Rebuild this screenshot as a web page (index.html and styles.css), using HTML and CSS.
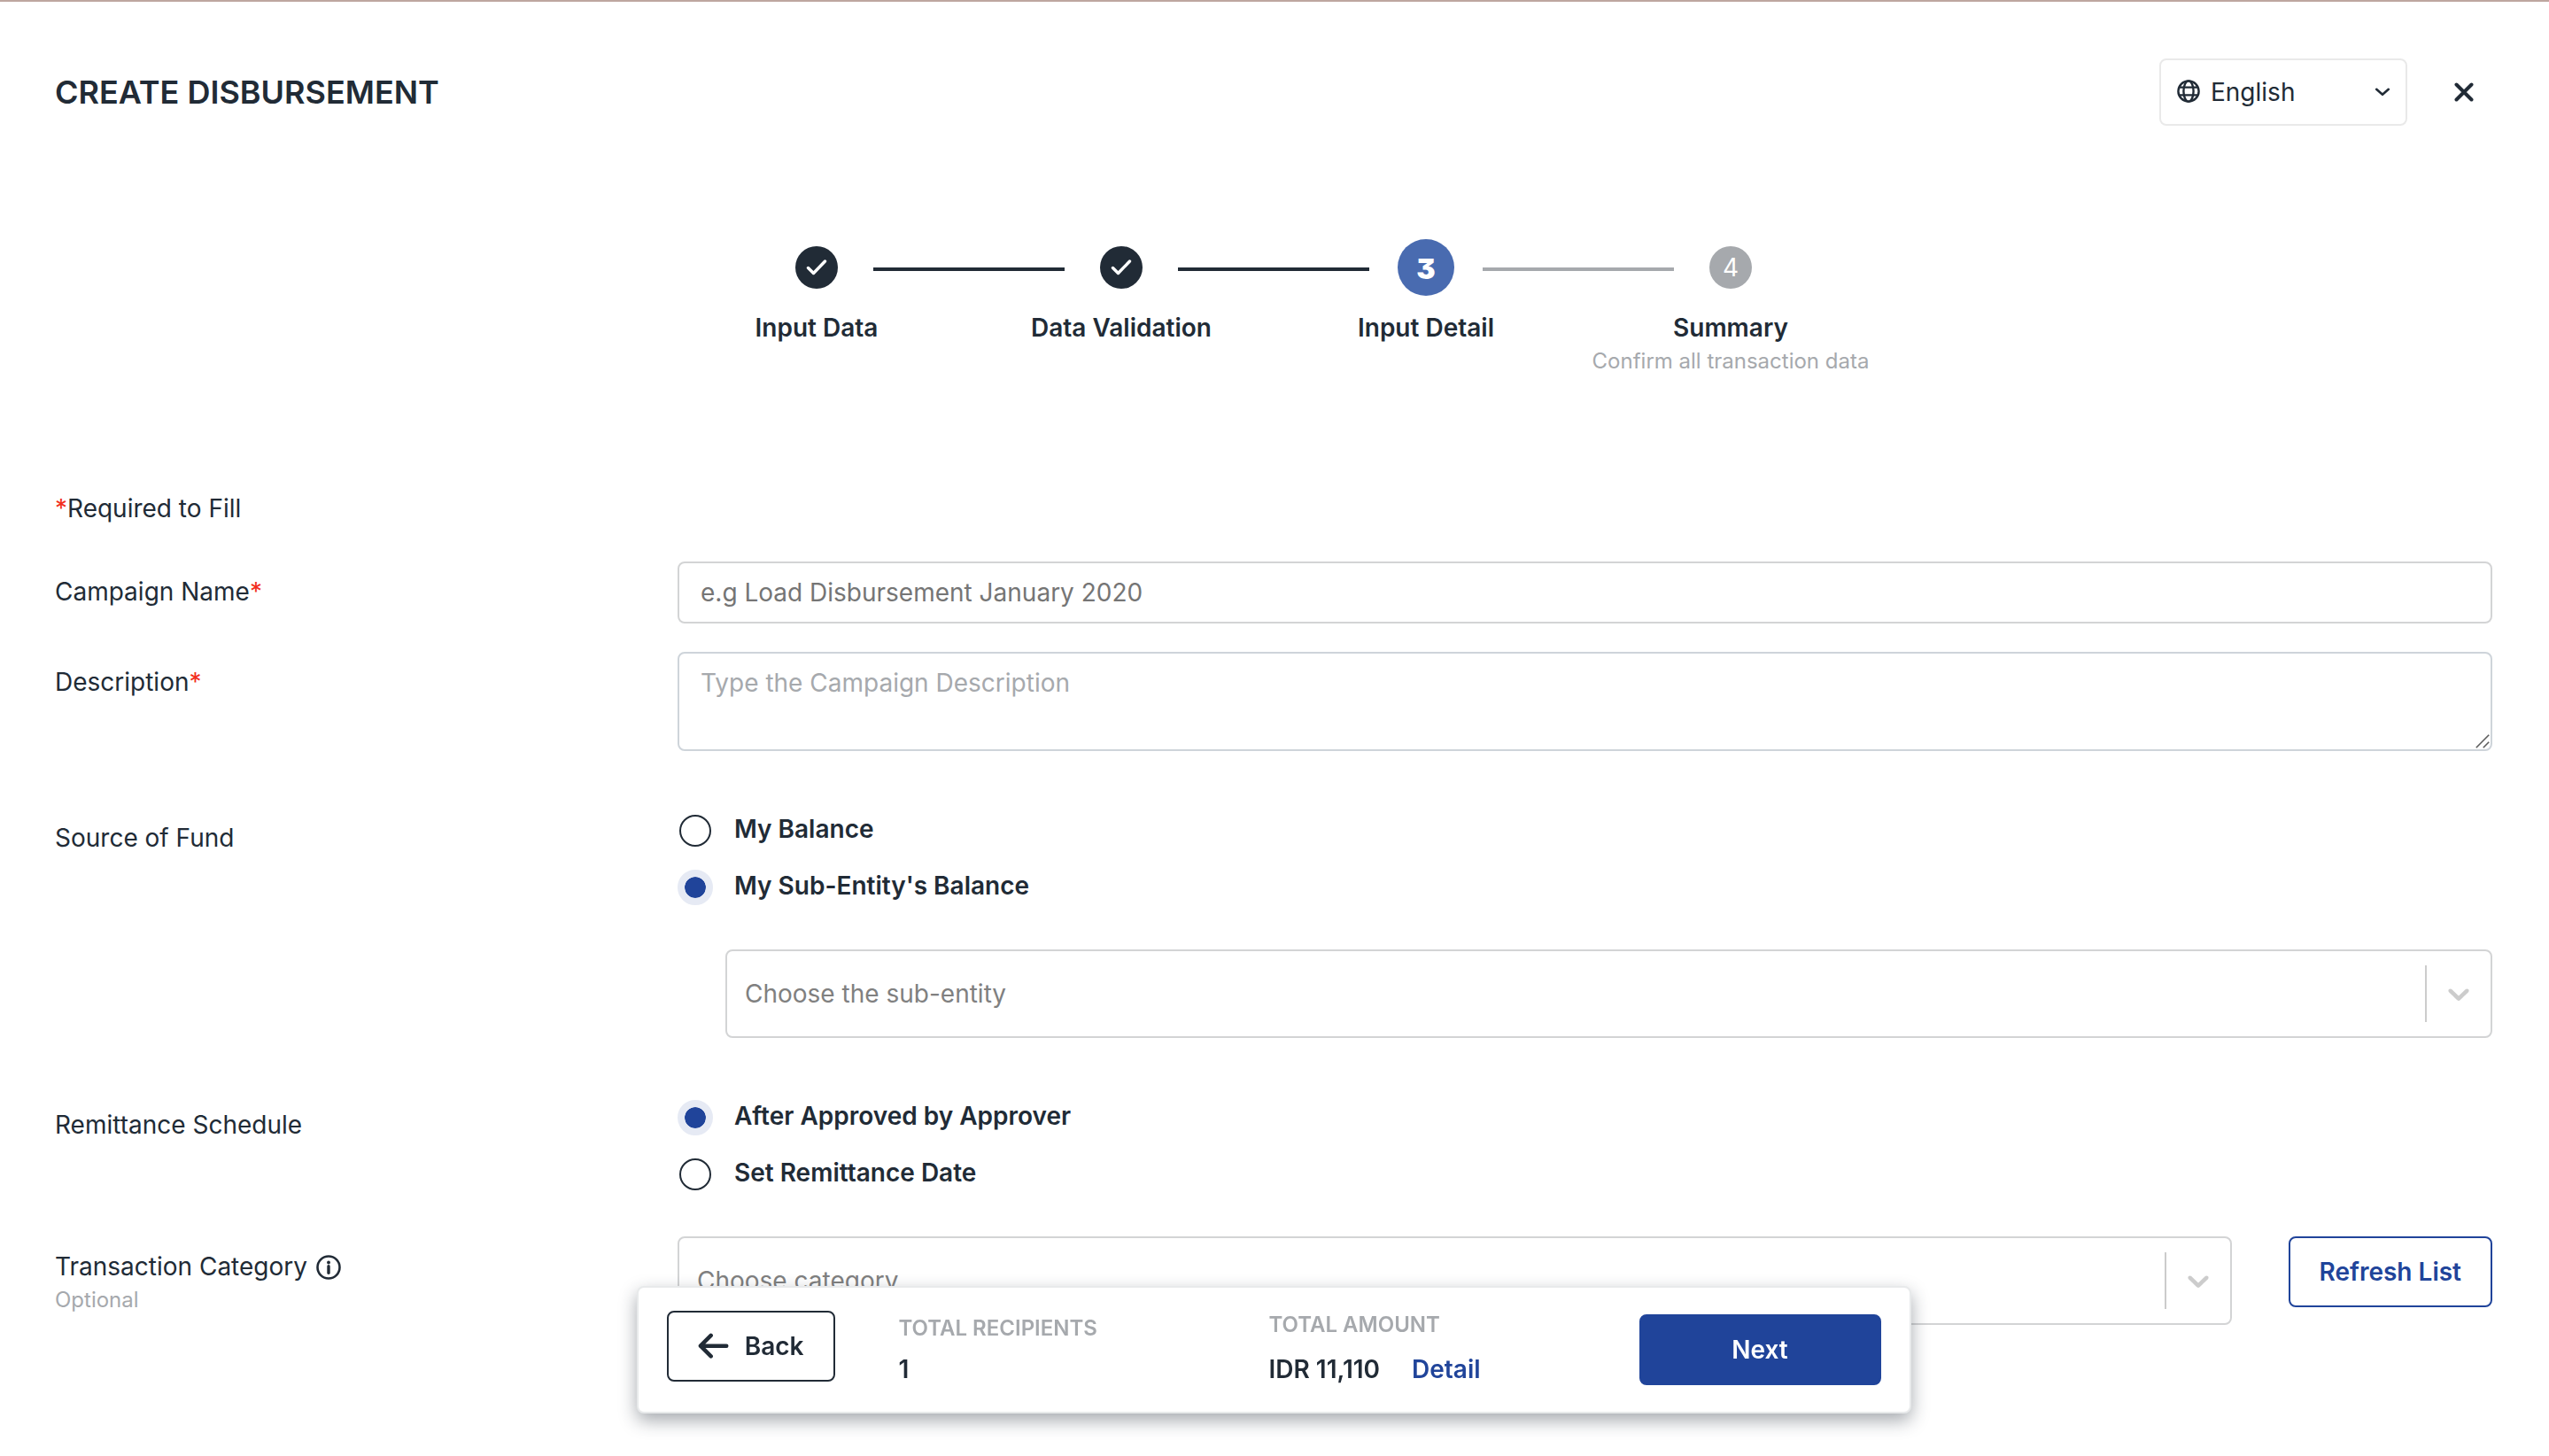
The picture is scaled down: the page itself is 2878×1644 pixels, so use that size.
FILE: index.html
```html
<!DOCTYPE html>
<html lang="en">
<head>
<meta charset="utf-8">
<meta name="viewport" content="width=device-width, initial-scale=1">
<title>Create Disbursement</title>
<link rel="stylesheet" href="styles.css">
</head>
<body>
<div class="page">
  <header class="header">
    <h1 class="title">CREATE DISBURSEMENT</h1>
    <div class="header-actions">
      <div class="select language">
        <svg class="globe" viewBox="0 0 26 26" fill="none" stroke="currentColor" stroke-width="2.400" aria-hidden="true"><circle cx="13" cy="13" r="11.600"/><ellipse cx="13" cy="13" rx="5.600" ry="11.600"/><path d="M2 8.600h22M2 17.400h22"/></svg>
        <select class="select-field language-field" aria-label="Language"><option>English</option></select>
        <svg class="language-arrow" viewBox="0 0 18 10" fill="none" stroke="currentColor" stroke-width="2.600" stroke-linecap="round" stroke-linejoin="round" aria-hidden="true"><path d="M2.200 1.800 9 7.800l6.800-6"/></svg>
      </div>
      <button class="close" type="button" aria-label="Close"><svg class="close-icon" viewBox="0 0 22 22" fill="none" stroke="currentColor" stroke-width="4" stroke-linecap="round" aria-hidden="true"><path d="M2.500 2.500l17 17M19.500 2.500l-17 17"/></svg></button>
    </div>
  </header>

  <ol class="stepper">
    <li class="step done">
      <div class="marker"><span class="dot"><svg class="check" viewBox="0 0 24 18" fill="none" stroke="currentColor" stroke-width="3.400" stroke-linecap="round" stroke-linejoin="round" aria-hidden="true"><path d="M2.500 9.500l6 6L21.500 2"/></svg></span></div>
      <span class="step-label">Input Data</span>
    </li>
    <li class="step done">
      <div class="marker"><span class="dot"><svg class="check" viewBox="0 0 24 18" fill="none" stroke="currentColor" stroke-width="3.400" stroke-linecap="round" stroke-linejoin="round" aria-hidden="true"><path d="M2.500 9.500l6 6L21.500 2"/></svg></span></div>
      <span class="step-label">Data Validation</span>
    </li>
    <li class="step active" aria-current="step">
      <div class="marker"><span class="dot">3</span></div>
      <span class="step-label">Input Detail</span>
    </li>
    <li class="step">
      <div class="marker"><span class="dot">4</span></div>
      <span class="step-label">Summary</span>
      <span class="hint">Confirm all transaction data</span>
    </li>
  </ol>

  <form class="form">
    <p class="required-note"><span class="star">*</span>Required to Fill</p>

    <div class="row">
      <label class="label" for="campaign">Campaign Name<span class="star">*</span></label>
      <input class="text-field" id="campaign" type="text" placeholder="e.g Load Disbursement January 2020">
    </div>

    <div class="row">
      <label class="label" for="description">Description<span class="star">*</span></label>
      <div class="area">
        <textarea class="text-field area-field" id="description" placeholder="Type the Campaign Description"></textarea>
        <svg class="grip" viewBox="0 0 16 16" fill="none" stroke="#5c5c5c" stroke-width="1.600" aria-hidden="true"><path d="M.8 15.200 15.200.8M8.800 15.200l6.400-6.400"/></svg>
      </div>
    </div>

    <div class="row choice-row" role="radiogroup" aria-labelledby="fund-label">
      <span class="label" id="fund-label">Source of Fund</span>
      <div class="choices">
        <label class="choice"><input class="radio" type="radio" name="fund"><span class="choice-text">My Balance</span></label>
        <label class="choice"><input class="radio" type="radio" name="fund" checked><span class="choice-text">My Sub-Entity's Balance</span></label>
        <div class="select nested">
          <select class="select-field" aria-label="Sub-entity"><option>Choose the sub-entity</option></select>
          <span class="indicator"><svg class="arrow" viewBox="0 0 20 20" fill="currentColor" aria-hidden="true"><path d="M4.516 7.548c0.436-0.446 1.043-0.481 1.576 0l3.908 3.747 3.908-3.747c0.533-0.481 1.141-0.446 1.574 0 0.436 0.445 0.408 1.197 0 1.615-0.406 0.418-4.695 4.502-4.695 4.502-0.217 0.223-0.502 0.335-0.787 0.335s-0.570-0.112-0.789-0.335c0 0-4.287-4.084-4.695-4.502s-0.436-1.170 0-1.615z"/></svg></span>
        </div>
      </div>
    </div>

    <div class="row choice-row" role="radiogroup" aria-labelledby="schedule-label">
      <span class="label" id="schedule-label">Remittance Schedule</span>
      <div class="choices">
        <label class="choice"><input class="radio" type="radio" name="schedule" checked><span class="choice-text">After Approved by Approver</span></label>
        <label class="choice"><input class="radio" type="radio" name="schedule"><span class="choice-text">Set Remittance Date</span></label>
      </div>
    </div>

    <div class="row category-row">
      <div class="label">
        <label class="label-line" for="category">Transaction Category
          <svg class="info" viewBox="0 0 28 28" fill="none" stroke="currentColor" aria-hidden="true"><circle cx="14" cy="14" r="12.500" stroke-width="2.600"/><path d="M14 12.800v7.400" stroke-width="3.400" stroke-linecap="round"/><circle cx="14" cy="8.500" r="1.900" fill="currentColor" stroke="none"/></svg>
        </label>
        <span class="hint">Optional</span>
      </div>
      <div class="category">
        <div class="select">
          <select class="select-field" id="category"><option>Choose category</option></select>
          <span class="indicator"><svg class="arrow" viewBox="0 0 20 20" fill="currentColor" aria-hidden="true"><path d="M4.516 7.548c0.436-0.446 1.043-0.481 1.576 0l3.908 3.747 3.908-3.747c0.533-0.481 1.141-0.446 1.574 0 0.436 0.445 0.408 1.197 0 1.615-0.406 0.418-4.695 4.502-4.695 4.502-0.217 0.223-0.502 0.335-0.787 0.335s-0.570-0.112-0.789-0.335c0 0-4.287-4.084-4.695-4.502s-0.436-1.170 0-1.615z"/></svg></span>
        </div>
        <button class="button outline refresh" type="button">Refresh List</button>
      </div>
    </div>
  </form>
</div>

<footer class="summary-bar">
  <button class="button back" type="button">
    <svg class="back-arrow" viewBox="0 0 36 30" fill="none" stroke="currentColor" stroke-width="4.600" stroke-linecap="round" stroke-linejoin="round" aria-hidden="true"><path d="M15 3 3 15l12 12M3 15h30"/></svg>
    Back
  </button>
  <div class="total">
    <span class="caption">TOTAL RECIPIENTS</span>
    <span class="figure">1</span>
  </div>
  <div class="total amount">
    <span class="caption">TOTAL AMOUNT</span>
    <span class="figure">IDR 11,110 <a class="detail" href="#detail">Detail</a></span>
  </div>
  <button class="button primary next" type="button">Next</button>
</footer>
</body>
</html>
```
FILE: styles.css
```css
* {
  box-sizing: border-box;
}

body {
  margin: 0;
  background: #fff;
  color: #212b36;
  font: 400 28px/42px Inter, "Liberation Sans", sans-serif;
}

button,
input,
select,
textarea {
  margin: 0;
  font: inherit;
  color: inherit;
}

.page {
  border-top: 2px solid #bea6a0;
  padding: 64px 64px 144px 62px;
}

/* Header */
.header {
  display: flex;
  justify-content: space-between;
  align-items: center;
}

.title {
  margin: 0;
  font-size: 36px;
  font-weight: 600;
}

.header-actions {
  display: flex;
  align-items: center;
  gap: 32px;
}

.close {
  display: flex;
  justify-content: center;
  align-items: center;
  width: 64px;
  height: 64px;
  padding: 0;
  border: 0;
  background: none;
}

.close-icon {
  width: 22px;
}

/* Drop-downs: the field and its ornaments share one grid cell */
.select {
  display: grid;
  align-items: center;
}

.select > * {
  grid-area: 1 / 1;
}

.select svg,
.indicator {
  pointer-events: none;
  z-index: 1;
}

.select-field {
  width: 100%;
  height: 100px;
  padding: 0 80px 0 20px;
  border: 2px solid #d3d4d5;
  border-radius: 8px;
  background: #fff;
  color: #808080;
  appearance: none;
}

.indicator {
  display: flex;
  justify-self: end;
  align-items: center;
  height: 64px;
  margin-right: 2px;
  padding: 0 16px;
  border-left: 2px solid #ccc;
  color: #ccc;
}

.arrow {
  width: 40px;
}

.language {
  width: 280px;
}

.language-field {
  height: 76px;
  padding: 0 56px;
  border-color: #e9e9e9;
  color: #212b36;
}

.globe {
  width: 26px;
  margin: 0 0 2px 20px;
}

.language-arrow {
  justify-self: end;
  width: 18px;
  margin-right: 19px;
}

/* Stepper */
.stepper {
  display: flex;
  justify-content: center;
  margin: 128px 0 0;
  padding: 0;
  list-style: none;
}

.step {
  display: flex;
  flex-direction: column;
  align-items: center;
  width: 344px;
  color: #a6a9ad;
}

.done {
  color: #212b36;
}

.marker {
  display: grid;
  grid-template-columns: 1fr auto 1fr;
  align-items: center;
  width: 100%;
  height: 64px;
  margin-bottom: 15px;
}

/* Connector halves meet at the boundary between two steps */
.marker::before,
.marker::after {
  content: "";
  height: 4px;
  margin-top: 4px;
  background: currentColor;
}

.marker::before {
  margin-right: 40px;
}

.marker::after {
  margin-left: 40px;
}

.step:first-child .marker::before,
.step:last-child .marker::after {
  visibility: hidden;
}

.active .marker::before {
  margin-right: 32px;
  background: #212b36;
}

.active .marker::after {
  margin-left: 32px;
}

.dot {
  display: flex;
  justify-content: center;
  align-items: center;
  width: 48px;
  height: 48px;
  border-radius: 50%;
  background: #a6a9ad;
  color: #fff;
}

.done .dot {
  background: #212b36;
}

.active .dot {
  width: 64px;
  height: 64px;
  padding-top: 4px;
  background: #496bb0;
  font-size: 32px;
  font-weight: 900;
  font-feature-settings: "cv09";
}

.check {
  width: 24px;
}

.step-label {
  color: #212b36;
  font-weight: 600;
}

.hint {
  display: block;
  color: #a6a9ad;
  font-size: 24px;
  line-height: 34px;
}

/* Form */
.form {
  margin-top: 128px;
}

.required-note {
  margin: 0 0 39px;
}

.star {
  color: #f22e20;
}

.row {
  display: grid;
  grid-template-columns: 703px 1fr;
  align-items: start;
  margin-bottom: 32px;
}

.label {
  padding-top: 13px;
}

.choice-row {
  margin: 58px 0 0;
}

.choice-row .label {
  padding-top: 19px;
}

.category-row {
  margin: 38px 0 0;
}

.text-field {
  width: 100%;
  height: 70px;
  padding: 0 24px;
  border: 2px solid #d3d4d5;
  border-radius: 8px;
  background: #fff;
}

.text-field::placeholder {
  color: #757575;
}

.area {
  display: grid;
}

.area > * {
  grid-area: 1 / 1;
}

.area-field {
  height: 112px;
  padding: 12px 24px;
  border-color: #ced4da;
}

.area-field::placeholder {
  color: #a6a9ad;
}

.area-field::-webkit-resizer {
  display: none;
}

.grip {
  place-self: end;
  z-index: 1;
  width: 16px;
  margin: 0 3px 3px 0;
  pointer-events: none;
}

.choice {
  display: flex;
  align-items: center;
  gap: 24px;
  height: 64px;
}

.choice-text {
  padding-bottom: 4px;
  font-weight: 600;
}

.radio {
  width: 36px;
  height: 36px;
  margin: 0 2px;
  border: 2px solid #212b36;
  border-radius: 50%;
  background: #fff;
  appearance: none;
}

.radio:checked {
  width: 40px;
  height: 40px;
  margin: 0;
  border: 8px solid #e6eaf4;
  background: #20449a;
  background-clip: padding-box;
}

.nested {
  margin: 38px 0 0 54px;
}

.label-line {
  display: flex;
  align-items: center;
  gap: 10px;
}

.info {
  width: 28px;
  margin-top: 2px;
}

.category {
  display: grid;
  grid-template-columns: 1fr auto;
  align-items: start;
  gap: 64px;
}

/* Buttons */
.button {
  display: flex;
  justify-content: center;
  align-items: center;
  height: 80px;
  padding: 0 33px;
  border: 2px solid #212b36;
  border-radius: 8px;
  background: #fff;
  font-weight: 600;
}

.outline {
  border-color: #20449a;
  color: #20449a;
}

.primary {
  border-color: #20449a;
  background: #20449a;
  color: #fff;
}

/* Bar that stays over the foot of the page */
.summary-bar {
  position: fixed;
  z-index: 2;
  bottom: 48px;
  left: calc(25% - 1px);
  display: grid;
  grid-template-columns: 262px 418px 1fr 273px;
  align-items: start;
  width: 50%;
  height: 144px;
  padding: 26px 32px 0;
  border: 2px solid #e8eaeb;
  border-radius: 8px;
  background: #fff;
  box-shadow: 0 8px 20px rgba(33, 43, 54, 0.4);
}

.back {
  gap: 18px;
  width: 190px;
}

.back-arrow {
  width: 36px;
}

.total {
  display: flex;
  flex-direction: column;
  gap: 9px;
  padding-top: 4px;
}

.amount {
  gap: 13px;
  padding-top: 0;
}

.caption {
  color: #a6a9ad;
  font-size: 24px;
  font-weight: 600;
  line-height: 32px;
}

.figure {
  display: flex;
  gap: 36px;
  font-weight: 600;
}

.detail {
  color: #20449a;
  text-decoration: none;
}

.next {
  margin-top: 4px;
}
```
